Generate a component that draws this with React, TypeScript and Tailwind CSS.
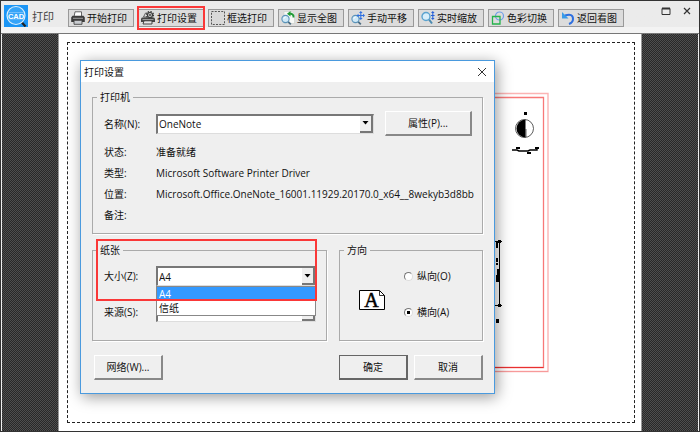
import * as React from "react"
import { clsx } from "clsx"

/**
 * Toolbar icons
 */
function PrinterIcon() {
  return (
    <svg viewBox="0 0 14 14" className="size-3.5 shrink-0">
      <path d="M4 .8h6.500V6H3z" fill="#fff" stroke="#555" strokeWidth="0.900" />
      <path d="M1.500 4.800h11l1.300 1.700V11H.2V6.500z" fill="#3c3c3c" />
      <path d="M2 7.300h10" stroke="#aaa" strokeWidth="0.900" />
      <path d="M3 9.300h8v4H3z" fill="#c9ccd0" stroke="#444" strokeWidth="0.900" />
    </svg>
  )
}

function PrinterGearIcon() {
  return (
    <svg viewBox="0 0 14 14" className="size-3.5 shrink-0">
      <path d="M2.500 6l2-4h4v4z" fill="#ddd" stroke="#444" strokeWidth="0.800" />
      <path d="M1 6.500h12l1 1V11H0V7.500z" fill="#444" />
      <path d="M1.500 8.600h11" stroke="#bbb" strokeWidth="0.800" />
      <path d="M3 9.800h8V13H2z" fill="#e4e4e4" stroke="#333" strokeWidth="0.900" />
      <circle cx="9" cy="4" r="2.500" fill="#ccc" stroke="#3a3a3a" strokeWidth="1.200" />
      <circle cx="9" cy="4" r="3.500" fill="none" stroke="#3a3a3a" strokeWidth="1.200" strokeDasharray="1.400 1.350" />
      <circle cx="9" cy="4" r="0.900" fill="#333" />
    </svg>
  )
}

function MarqueeIcon() {
  return (
    <svg viewBox="0 0 14 14" className="size-3.5 shrink-0">
      <path d="M.5.5h13v13H.5z" fill="#d9d9d9" stroke="#555" strokeDasharray="2 1.250" />
    </svg>
  )
}

function Magnifier() {
  return (
    <>
      <path d="M6.800 10.300l3 3" stroke="#4a6a80" strokeWidth="1.800" />
      <circle cx="4.500" cy="8" r="3.600" fill="#cfe9f8" stroke="#5b93b8" strokeWidth="1.100" />
      <path d="M2.800 7.800q.4-1.800 2-1.800" fill="none" stroke="#fff" />
    </>
  )
}

function FitIcon() {
  return (
    <svg viewBox="0 0 14 14" className="size-3.5 shrink-0">
      <path d="M3 .5h8L13.500 3v9.500H3z" fill="#f6f8f6" stroke="#c8ccc8" strokeWidth="0.600" />
      <Magnifier />
      <path d="M12.500 6.500q.5-4-4.500-4" fill="none" stroke="#1f9a35" strokeWidth="1.900" />
      <path d="M9.500 0v5.500L6 2.700z" fill="#1f9a35" />
    </svg>
  )
}

function PanIcon() {
  return (
    <svg viewBox="0 0 14 14" className="size-3.5 shrink-0">
      <Magnifier />
      <path d="M9.800 1.500v6M7 4.500h6" stroke="#2f6fe0" strokeWidth="1.100" />
      <path d="M9.800 0l1.800 2H8zM9.800 9l1.800-2H8zM5.500 4.500l2-1.800v3.600zM14 4.500l-2-1.800v3.600z" fill="#2f6fe0" />
    </svg>
  )
}

function ZoomIcon() {
  return (
    <svg viewBox="0 0 14 14" className="size-3.5 shrink-0">
      <path d="M8 8.500l3 4" stroke="#4a8ab0" strokeWidth="2" />
      <circle cx="5" cy="5.500" r="4" fill="#d8eefa" stroke="#5ba3cf" strokeWidth="1.400" />
      <path d="M11.800 1v7" stroke="#2a62d8" strokeWidth="1.100" />
      <path d="M11.800 0l1.800 2H10zM11.800 9l1.800-2H10zM10 4h3.600v1H10z" fill="#2a62d8" />
    </svg>
  )
}

function ColorIcon() {
  return (
    <svg viewBox="0 0 14 14" className="size-3.5 shrink-0">
      <circle cx="8.500" cy="5" r="4" fill="none" stroke="#6f9ee8" strokeWidth="1.200" />
      <path d="M1.500 5.500h7.500v7.500H1.500z" fill="none" stroke="#25b34b" strokeWidth="1.300" />
    </svg>
  )
}

function BackIcon() {
  return (
    <svg viewBox="0 0 14 14" className="size-3.5 shrink-0">
      <path d="M4 4.500q8-2.500 8 3.500 0 3.500-4 5" fill="none" stroke="#2d6fe0" strokeWidth="2" />
      <path d="M1 1v6.500h6.500z" fill="#3a9be8" />
    </svg>
  )
}

function LogoIcon() {
  return (
    <svg viewBox="0 0 24 22" className="h-[22px] w-6 shrink-0">
      <rect width="24" height="22" fill="#1b95f5" />
      <path d="M17.500 17l4 4.500" stroke="#222" strokeWidth="2.200" />
      <circle cx="12" cy="10.500" r="9" fill="#36a4f8" stroke="#d8eefc" strokeWidth="1.200" />
      <path d="M4.500 7.500h15M4.500 14h15" stroke="#8fcbfb" strokeWidth="0.700" />
      <text x="12" y="13.500" textAnchor="middle" fontSize="7.500" fontWeight="700" fill="#fff" className="font-['Liberation_Sans',sans-serif]">
        CAD
      </text>
    </svg>
  )
}

const tools = [
  { label: "开始打印", Icon: PrinterIcon },
  { label: "打印设置", Icon: PrinterGearIcon, marked: true },
  { label: "框选打印", Icon: MarqueeIcon },
  { label: "显示全图", Icon: FitIcon },
  { label: "手动平移", Icon: PanIcon },
  { label: "实时缩放", Icon: ZoomIcon },
  { label: "色彩切换", Icon: ColorIcon },
  { label: "返回看图", Icon: BackIcon },
]

/**
 * Top bar with logo, tools and window controls
 */
function Toolbar() {
  return (
    <header className="flex h-[33px] items-start border-b border-[#777] bg-linear-to-b from-[#ebebeb] from-80% to-[#f3f3f3] to-80% pt-1 pl-[3px]">
      <LogoIcon />
      <h1 className="mt-1 ml-1 w-9 text-[11px] leading-4 text-[#444]">打印</h1>
      <nav className="mt-1 flex gap-1">
        {tools.map(({ label, Icon, marked }) => (
          <div key={label} className="relative">
            <button className="flex h-[18px] w-[66px] items-center gap-0.5 border border-[#999] bg-[#dcdcdc] pl-0.5 text-[10px] leading-4 whitespace-nowrap">
              <Icon />
              {label}
            </button>
            {marked && <span className="pointer-events-none absolute -inset-x-px -inset-y-[3px] border-2 border-[#fa3838]" />}
          </div>
        ))}
      </nav>
      <div className="ml-auto flex gap-[9px] pr-1.5 text-[#333]">
        <button aria-label="最大化" className="size-3">
          <svg viewBox="0 0 12 12" fill="none" stroke="currentColor">
            <path d="M2 3.500h8v6H2z" />
            <path d="M2 3.500h8" strokeWidth="2" />
          </svg>
        </button>
        <button aria-label="关闭" className="size-3">
          <svg viewBox="0 0 12 12" fill="none" stroke="currentColor" strokeWidth="1.200">
            <path d="M3 3l6 6M9 3L3 9" />
          </svg>
        </button>
      </div>
    </header>
  )
}

/**
 * The visible part of the CAD sheet: frame, north mark and plan details
 */
function SheetDrawing() {
  return (
    <svg viewBox="480 92 70 282" className="absolute top-[49px] right-[84px] h-[282px] w-[70px]" fill="none">
      <path d="M480 93.500h68v278h-68" stroke="#fbb4b4" strokeWidth="1.400" />
      <path d="M480 97.500h63.500v270H480" stroke="#f87878" strokeWidth="1.300" />
      <path d="M480 367.500h63.500" stroke="#e83030" />
      <path d="M480 371.500h68" stroke="#f79a9a" />
      <path d="M524 112h3v3h-3z" fill="#000" />
      <circle cx="524.500" cy="128.500" r="9" stroke="#333" strokeWidth="0.800" />
      <path d="M525.500 119.500a9 9 0 0 0 0 18z" fill="#000" />
      <path d="M526 129v8" stroke="#000" strokeWidth="0.600" />
      <path d="M512 150h5l2 1h9l2-1h7v-2h2" stroke="#000" strokeWidth="1.400" />
      <path d="M516 147h4v2h-4zM535 147h4v2h-4zM527 152h4v2h-4z" fill="#000" />
      <path d="M494 241.500h8M494 305.500h8M499.500 241v65" stroke="#000" />
      <path d="M498 240h3v3h-3zM498 304h3v3h-3zM496 242h2v6h-2zM496 258h2v4h-2zM496 263h2v2h-2zM497 269h2v9h-2zM496 275h3v7h-3zM496 319h3v4h-3z" fill="#000" />
    </svg>
  )
}

/**
 * Etched group box with a caption
 */
function GroupBox({
  title,
  className,
  children,
}: {
  title: string
  className?: string
  children: React.ReactNode
}) {
  return (
    <fieldset className="min-w-0 border border-[#aaa] shadow-[1px_1px_0_#fff]">
      <legend className="ml-1 px-[3px] text-[10px] leading-3">{title}</legend>
      <div className={className}>{children}</div>
    </fieldset>
  )
}

/**
 * Drop-down box with a raised arrow
 */
function Combo({ id, options, className }: { id: string; options: string[]; className?: string }) {
  return (
    <div className={clsx("relative", className)}>
      <select
        id={id}
        className="block h-5 w-full appearance-none border-t-2 border-r border-b border-l-2 border-t-[#777] border-r-[#ddd] border-b-[#ddd] border-l-[#777] bg-white pl-px text-[10px] leading-4 outline-none"
      >
        {options.map((option) => (
          <option key={option}>{option}</option>
        ))}
      </select>
      <span className="pointer-events-none absolute top-0.5 right-px flex h-[17px] w-[13px] items-center justify-center border-r-2 border-b-2 border-[#777] bg-[#efefef]">
        <svg viewBox="0 0 7 4" className="h-1 w-[7px]">
          <path d="M.5 0h6L3.500 3.500z" fill="#000" />
        </svg>
      </span>
    </div>
  )
}

function PushButton({ primary, className, children }: { primary?: boolean; className?: string; children: React.ReactNode }) {
  return (
    <button
      className={clsx(
        "h-[25px] border-t border-r-2 border-b-2 border-l bg-[#efefef] text-[10px] leading-4",
        primary ? "border-[#666]" : "border-t-white border-r-[#888] border-b-[#888] border-l-white",
        className
      )}
    >
      {children}
    </button>
  )
}

const details = [
  { label: "状态:", value: "准备就绪" },
  { label: "类型:", value: "Microsoft Software Printer Driver" },
  { label: "位置:", value: "Microsoft.Office.OneNote_16001.11929.20170.0_x64__8wekyb3d8bb" },
  { label: "备注:", value: "" },
]

function PrinterGroup() {
  return (
    <GroupBox title="打印机" className="pt-2 pb-[7px] pl-[11px]">
      <div className="flex items-center text-[10px] leading-4">
        <label htmlFor="printer" className="w-[52px]">
          名称(N):
        </label>
        <Combo id="printer" options={["OneNote"]} className="w-[218px]" />
        <PushButton className="ml-[11px] w-[87px]">属性(P)...</PushButton>
      </div>
      <dl className="mt-1.5 text-[10px] leading-[21px]">
        {details.map(({ label, value }) => (
          <div key={label} className="flex">
            <dt className="w-[52px] shrink-0">{label}</dt>
            <dd className="whitespace-nowrap">{value}</dd>
          </div>
        ))}
      </dl>
    </GroupBox>
  )
}

function PaperGroup() {
  return (
    <div className="relative w-[235px]">
      <GroupBox title="纸张" className="flex flex-col gap-4 pt-2.5 pb-[18px] pl-[11px] text-[10px] leading-4">
        <div className="flex items-center">
          <label htmlFor="size" className="w-[52px]">
            大小(Z):
          </label>
          <div className="relative w-40">
            <Combo id="size" options={["A4", "信纸"]} />
            <ul className="absolute inset-x-0 top-full z-10 border border-[#888] bg-white leading-[14px]">
              <li className="bg-[#3399ff] pl-0.5 text-white">A4</li>
              <li className="pl-0.5">信纸</li>
            </ul>
          </div>
        </div>
        <div className="flex items-center">
          <label htmlFor="source" className="w-[52px]">
            来源(S):
          </label>
          <Combo id="source" options={[""]} className="w-40" />
        </div>
      </GroupBox>
      <span className="pointer-events-none absolute -top-[5px] left-1 z-20 h-[62px] w-[221px] border-2 border-[#fa3838]" />
    </div>
  )
}

function OrientationGroup() {
  const choices = [
    { id: "portrait", label: "纵向(O)" },
    { id: "landscape", label: "横向(A)", checked: true },
  ]
  return (
    <div className="grid flex-1">
      <GroupBox title="方向" className="flex items-start gap-[18px] pt-2.5 pl-[19px]">
        <svg viewBox="0 0 27 20" className="mt-6 h-5 w-[27px]">
          <path d="M.5.500h20l5 5v14H.5z" fill="#fff" stroke="#000" />
          <path d="M20.500.500v5h5" fill="none" stroke="#000" strokeWidth="0.800" />
          <text x="12.500" y="16.500" textAnchor="middle" fontSize="20" className="font-['Liberation_Serif',serif]" stroke="#000" strokeWidth="0.500">
            A
          </text>
        </svg>
        <div className="flex flex-col gap-4 text-[10px]">
          {choices.map(({ id, label, checked }) => (
            <div key={id} className="flex h-5 items-center gap-1">
              <input
                type="radio"
                id={id}
                name="orientation"
                defaultChecked={checked}
                className="size-[9px] appearance-none rounded-full border border-t-[#777] border-r-[#ddd] border-b-[#ddd] border-l-[#777] bg-white checked:bg-[radial-gradient(circle,#000_0_1.5px,#fff_2px)]"
              />
              <label htmlFor={id}>{label}</label>
            </div>
          ))}
        </div>
      </GroupBox>
    </div>
  )
}

/**
 * Print settings dialog
 */
function PrintDialog() {
  return (
    <section
      role="dialog"
      aria-labelledby="dialog-title"
      className="absolute top-[26px] left-[79px] w-[415px] border border-[#4a9ade] bg-[#efefef] shadow-[2px_3px_14px_rgba(0,0,0,0.4)]"
    >
      <div className="flex h-[21px] items-center justify-between bg-white pr-[7px] pl-[3px]">
        <h2 id="dialog-title" className="text-[10px] leading-4">
          打印设置
        </h2>
        <button aria-label="关闭" className="size-2.5">
          <svg viewBox="0 0 10 10" stroke="#333">
            <path d="M1 1l8 8M9 1L1 9" />
          </svg>
        </button>
      </div>
      <div className="flex flex-col gap-2.5 px-[11px] pt-[9px] pb-[13px]">
        <PrinterGroup />
        <div className="flex gap-3">
          <PaperGroup />
          <OrientationGroup />
        </div>
        <div className="mt-1 flex gap-1.5 pl-0.5">
          <PushButton className="w-[69px]">网络(W)...</PushButton>
          <PushButton primary className="ml-auto w-[69px]">
            确定
          </PushButton>
          <PushButton className="w-[69px]">取消</PushButton>
        </div>
      </div>
    </section>
  )
}

function Hatch() {
  return (
    <div className="w-14 shrink-0 bg-[repeating-conic-gradient(#282828_0_25%,#4e4e4e_0_50%)] bg-[length:2px_2px]" />
  )
}

export default function App() {
  return (
    <div className="flex min-h-screen flex-col border border-[#333] bg-[#efefef] font-['Open_Sans','Noto_Sans_CJK_SC',sans-serif] text-[#111]">
      <Toolbar />
      <main className="relative flex flex-1 px-px">
        <Hatch />
        <div className="flex flex-1 border-x border-[#999] bg-white py-2 pr-1.5 pl-2">
          <div className="relative flex-1 border border-dashed border-[#222]">
            <SheetDrawing />
          </div>
        </div>
        <Hatch />
        <PrintDialog />
      </main>
    </div>
  )
}
